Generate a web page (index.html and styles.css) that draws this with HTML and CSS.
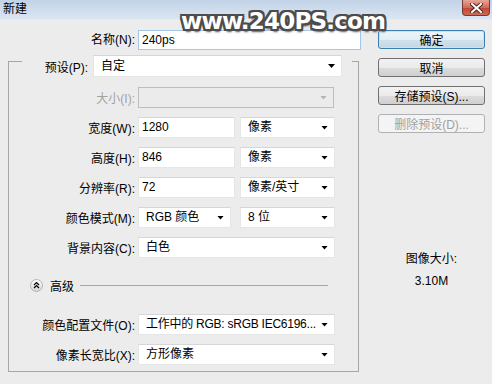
FILE: index.html
```html
<!DOCTYPE html>
<html lang="zh-CN">
<head>
  <meta charset="UTF-8" />
  <title>新建</title>
  <link rel="stylesheet" href="styles.css">
</head>
<body>
  <div class="dialog">
    <div class="titlebar">
      <span class="title">新建</span>
      <div class="close">
        <svg width="13" height="10" viewBox="0 0 13 10">
          <path d="M2 1 L11 9 M11 1 L2 9" stroke="#4a2a2a" stroke-width="4" stroke-linecap="square"/>
          <path d="M2 1 L11 9 M11 1 L2 9" stroke="#fff" stroke-width="2" stroke-linecap="square"/>
        </svg>
      </div>
    </div>

    <div class="content">
      <div class="main">
        <div class="name-row">
          <label>名称(N):</label>
          <div class="field input focus">240ps</div>
        </div>

        <div class="group">
          <div class="preset-row">
            <label>预设(P):</label>
            <div class="field select preset">自定<i class="arrow"></i></div>
          </div>

          <div class="row">
            <label class="off">大小(I):</label>
            <div class="field select full disabled"><i class="arrow"></i></div>
          </div>
          <div class="row">
            <label>宽度(W):</label>
            <div class="field input num">1280</div>
            <div class="field select unit">像素<i class="arrow"></i></div>
          </div>
          <div class="row">
            <label>高度(H):</label>
            <div class="field input num">846</div>
            <div class="field select unit">像素<i class="arrow"></i></div>
          </div>
          <div class="row">
            <label>分辨率(R):</label>
            <div class="field input num">72</div>
            <div class="field select unit">像素/英寸<i class="arrow"></i></div>
          </div>
          <div class="row">
            <label>颜色模式(M):</label>
            <div class="field select mode">RGB 颜色<i class="arrow"></i></div>
            <div class="field select unit">8 位<i class="arrow"></i></div>
          </div>
          <div class="row">
            <label>背景内容(C):</label>
            <div class="field select full">白色<i class="arrow"></i></div>
          </div>

          <div class="advanced">
            <div class="toggle">
              <svg width="13" height="13" viewBox="0 0 13 13">
                <defs>
                  <linearGradient id="tg" x1="0" y1="0" x2="0" y2="1">
                    <stop offset="0" stop-color="#ffffff"/>
                    <stop offset="1" stop-color="#d4d4d4"/>
                  </linearGradient>
                </defs>
                <circle cx="6.5" cy="6.5" r="6" fill="url(#tg)" stroke="#b4b4b4"/>
                <path d="M4 6 L6.5 3.5 L9 6 M4 9 L6.5 6.5 L9 9" fill="none" stroke="#000" stroke-width="1.2"/>
              </svg>
            </div>
            <span>高级</span>
            <div class="rule"></div>
          </div>

          <div class="row first-adv">
            <label>颜色配置文件(O):</label>
            <div class="field select full profile">工作中的 RGB: sRGB IEC6196...<i class="arrow"></i></div>
          </div>
          <div class="row">
            <label>像素长宽比(X):</label>
            <div class="field select full">方形像素<i class="arrow"></i></div>
          </div>
        </div>
      </div>

      <div class="side">
        <button class="btn default">确定</button>
        <button class="btn">取消</button>
        <button class="btn">存储预设(S)...</button>
        <button class="btn" disabled>删除预设(D)...</button>
        <div class="size-info">
          <div>图像大小:</div>
          <div class="size-value">3.10M</div>
        </div>
      </div>
    </div>

    <div class="watermark">www.240PS.com</div>
  </div>
</body>
</html>
```

FILE: styles.css
```css
* {
  box-sizing: border-box;
  margin: 0;
  padding: 0;
}
body {
  width: 492px;
  height: 384px;
  overflow: hidden;
  font-family: "Liberation Sans", "Noto Sans CJK SC", sans-serif;
  font-size: 12px;
  color: #000;
}
.dialog {
  position: relative;
  width: 492px;
  height: 384px;
  background: #ececec;
}
.titlebar {
  height: 20px;
  display: flex;
  justify-content: space-between;
  background: linear-gradient(to bottom, #c2d3e8, #dbe5f2);
  border-bottom: 1px solid #e4ebf4;
}
.title {
  padding-left: 3px;
  line-height: 18px;
  font-size: 12px;
}
.close {
  width: 28px;
  height: 16px;
  margin-right: 2px;
  display: flex;
  align-items: center;
  justify-content: center;
  border: 1px solid #7a3a34;
  border-top: none;
  border-radius: 0 0 4px 4px;
  background: linear-gradient(to bottom, #e7a596, #d46a5a 50%, #c0452f 51%, #cf6a50);
}
.content {
  display: flex;
}
.main {
  width: 365px;
}
.name-row {
  display: flex;
  margin-top: 10px;
}
.name-row label {
  width: 135px;
  margin-right: 3px;
  text-align: right;
  line-height: 20px;
}
.field {
  height: 21px;
  line-height: 19px;
  background: #fff;
  border: 1px solid #e6e6e6;
  border-top-color: #d6d6d6;
  white-space: nowrap;
}
.input {
  padding-left: 3px;
}
.name-row .input {
  width: 223px;
  height: 20px;
  line-height: 18px;
}
.focus {
  border-color: #a3c6e9;
}
.select {
  display: flex;
  align-items: center;
  padding: 0 6px 0 7px;
}
.arrow {
  width: 7px;
  height: 4px;
  flex-shrink: 0;
  margin-left: auto;
  background: #000;
  clip-path: polygon(0 0, 100% 0, 50% 100%);
}
.profile {
  letter-spacing: -0.25px;
}
.group {
  width: 351px;
  margin: 11px 0 0 8px;
  border: 1px solid #a6a6a6;
  padding-bottom: 6px;
}
.preset-row {
  display: flex;
  align-items: center;
  width: 330px;
  margin: -7px 0 0 13px;
  background: #ececec;
}
.preset-row label {
  width: 66px;
  margin-right: 5px;
  text-align: right;
}
.preset {
  width: 249px;
  height: 22px;
  line-height: 20px;
}
.row {
  display: flex;
  align-items: center;
  margin-top: 9px;
}
.preset-row + .row {
  margin-top: 10px;
}
.row label {
  width: 126px;
  margin-right: 3px;
  text-align: right;
}
.off {
  color: #a2a2a2;
}
.full {
  width: 197px;
}
.num {
  width: 97px;
  margin-right: 5px;
}
.unit {
  width: 95px;
}
.mode {
  width: 93px;
  margin-right: 9px;
}
.disabled {
  width: 196px;
  background: #ebebeb;
  border-color: #bdbdbd;
}
.disabled .arrow {
  background: #b4b4b4;
}
.advanced {
  display: flex;
  align-items: center;
  height: 16px;
  margin-top: 19px;
  padding-left: 21px;
}
.toggle {
  width: 13px;
  height: 13px;
  display: flex;
}
.advanced span {
  margin-left: 7px;
  font-size: 12px;
}
.rule {
  flex: 1;
  height: 1px;
  margin: 0 30px 0 6px;
  background: #a6a6a6;
}
.first-adv {
  margin-top: 21px;
}
.side {
  width: 107px;
  margin-left: 13px;
  display: flex;
  flex-direction: column;
}
.btn {
  height: 19px;
  margin-top: 9px;
  font-family: inherit;
  font-size: 12px;
  color: #000;
  border: 1px solid #707070;
  border-radius: 3px;
  background: linear-gradient(to bottom, #f2f2f2, #ebebeb 50%, #dddddd 51%, #cfcfcf);
}
.btn:first-child {
  margin-top: 10px;
}
.btn.default {
  border-color: #3c7fb1;
  box-shadow: inset 0 0 0 1px #c4e5f6;
  background: linear-gradient(to bottom, #eaf4fa, #e2eef6 50%, #d2e2ec 51%, #c4d6e2);
}
.btn:disabled {
  color: #a0a0a0;
  border-color: #adb2b5;
  background: #f4f4f4;
}
.size-info {
  margin-top: 118px;
  text-align: center;
  line-height: 16px;
}
.size-value {
  margin-top: 6px;
}
.watermark {
  position: absolute;
  left: 181px;
  top: 7px;
  font-family: "DejaVu Sans", sans-serif;
  font-weight: bold;
  font-size: 23px;
  letter-spacing: -0.8px;
  color: #fff;
  line-height: 28px;
  text-shadow:
    2px 0 0 #4c4c4c, -2px 0 0 #4c4c4c, 0 2px 0 #4c4c4c, 0 -2px 0 #4c4c4c,
    2px 2px 0 #4c4c4c, -2px -2px 0 #4c4c4c, 2px -2px 0 #4c4c4c, -2px 2px 0 #4c4c4c,
    1px 3px 2px #555;
}
```
